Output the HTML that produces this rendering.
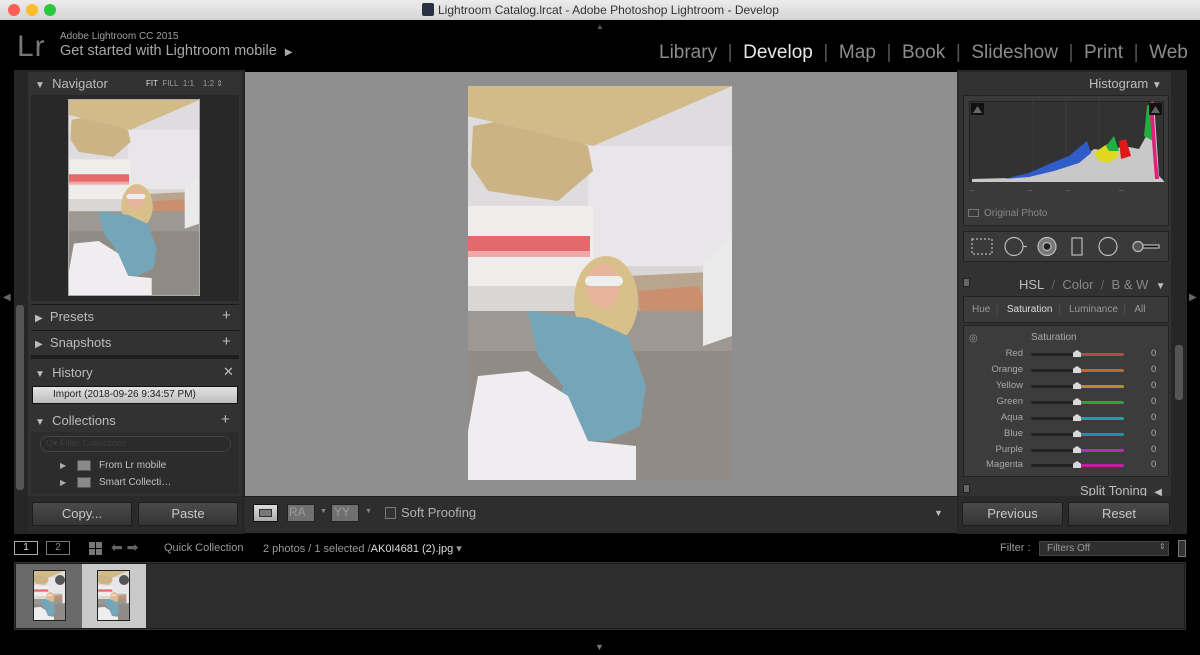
<!DOCTYPE html>
<html><head><meta charset="utf-8"><style>
*{margin:0;padding:0;box-sizing:border-box}
body{width:1200px;height:655px;overflow:hidden;background:#000;font-family:"Liberation Sans",sans-serif;position:relative}
.a{position:absolute}
.t{position:absolute;white-space:nowrap}
.hd{color:#bcbcbc;font-size:13px}
.sm{color:#9a9a9a;font-size:9px}
.btn{position:absolute;height:24px;background:linear-gradient(#4a4a4a,#353535);border:1px solid #1c1c1c;border-radius:2px;color:#c8c8c8;font-size:13px;text-align:center;line-height:22px}
.sl{position:absolute;left:1031px;width:93px;height:3px;border-radius:2px}
.lbl{position:absolute;width:60px;left:963px;text-align:right;color:#a8a8a8;font-size:9.5px}
.zero{position:absolute;left:1151px;color:#a8a8a8;font-size:9.5px}
.th{position:absolute;left:1073px;width:8px;height:7px;background:#d8d8d8;clip-path:polygon(50% 0,100% 40%,100% 100%,0 100%,0 40%)}
</style></head><body>
<svg width="0" height="0" style="position:absolute"><defs>
<symbol id="ph" viewBox="0 0 264 394" preserveAspectRatio="none">
<rect width="264" height="394" fill="#dedcde"/>
<rect x="120" y="60" width="144" height="130" fill="#e8e6e8"/>
<rect x="0" y="180" width="264" height="60" fill="#d9d6d6"/>
<polygon points="160,190 264,185 264,260 160,255" fill="#b9a48e"/>
<polygon points="170,205 230,200 250,240 175,245" fill="#c98f6f"/>
<polygon points="5,40 60,30 120,60 125,85 90,115 20,105 3,80" fill="#cbb386"/>
<rect x="0" y="120" width="125" height="80" fill="#efecec"/>
<rect x="0" y="150" width="122" height="20" fill="#e26a6a"/>
<rect x="0" y="165" width="122" height="6" fill="#f1a8a8"/>
<polygon points="0,0 264,0 255,4 125,60 0,30" fill="#d2bb88"/>
<rect x="0" y="225" width="264" height="169" fill="#908b85"/>
<rect x="0" y="225" width="264" height="40" fill="#9d9892"/>
<polygon points="235,175 264,150 264,250 235,260" fill="#eaeaea"/>
<ellipse cx="138" cy="215" rx="32" ry="45" fill="#d9c08a"/>
<ellipse cx="135" cy="200" rx="17" ry="22" fill="#e6b59b"/>
<rect x="117" y="190" width="38" height="10" rx="5" fill="#eee"/>
<polygon points="60,225 120,232 160,250 178,300 172,340 140,355 80,355 95,300 70,270" fill="#74a5b9"/>
<polygon points="0,345 10,290 60,285 100,310 120,355 168,360 168,394 0,394" fill="#efedf0"/>
</symbol></defs></svg>

<!-- title bar -->
<div class="a" style="left:0;top:0;width:1200px;height:20px;background:linear-gradient(#ececec,#d4d4d4)"></div>
<div class="a" style="left:8px;top:4px;width:12px;height:12px;border-radius:50%;background:#fc5f57"></div>
<div class="a" style="left:26px;top:4px;width:12px;height:12px;border-radius:50%;background:#fdbc2e"></div>
<div class="a" style="left:44px;top:4px;width:12px;height:12px;border-radius:50%;background:#29c840"></div>
<div class="a" style="left:422px;top:3px;width:12px;height:13px;background:#2a3140;border-radius:2px"></div>
<div class="t" style="left:438px;top:3px;font-size:12px;color:#333">Lightroom Catalog.lrcat - Adobe Photoshop Lightroom - Develop</div>
<div class="t" style="left:596px;top:22px;color:#555;font-size:8px">▲</div>

<!-- header -->
<div class="t" style="left:17px;top:30px;font-size:30px;color:#777;letter-spacing:1px">Lr</div>
<div class="t" style="left:60px;top:31px;font-size:10px;color:#a0a0a0">Adobe Lightroom CC 2015</div>
<div class="t" style="left:60px;top:43px;font-size:14.5px;color:#a8a8a8">Get started with Lightroom mobile &nbsp;<span style="font-size:10px">▶</span></div>
<div class="t" style="left:659px;top:42px;font-size:19px;color:#8c8c8c">Library <span style="color:#555">&nbsp;|&nbsp;</span> <span style="color:#e8e8e8">Develop</span> <span style="color:#555">&nbsp;|&nbsp;</span> Map <span style="color:#555">&nbsp;|&nbsp;</span> Book <span style="color:#555">&nbsp;|&nbsp;</span> Slideshow <span style="color:#555">&nbsp;|&nbsp;</span> Print <span style="color:#555">&nbsp;|&nbsp;</span> Web</div>

<!-- side arrows -->
<div class="t" style="left:3px;top:292px;color:#666;font-size:10px">◀</div>
<div class="t" style="left:1189px;top:292px;color:#666;font-size:10px">▶</div>

<!-- left panel -->
<div class="a" style="left:14px;top:70px;width:231px;height:464px;background:#262626"></div>
<div class="a" style="left:16px;top:305px;width:8px;height:185px;background:#555;border-radius:3px"></div>
<div class="a" style="left:28px;top:72px;width:214px;height:459px;background:#323232"></div>
<div class="t hd" style="left:35px;top:76px"><span style="font-size:10px">▼</span>&nbsp; Navigator</div>
<div class="t sm" style="left:146px;top:79px;font-size:8px"><span style="color:#ddd">FIT</span>&nbsp; FILL&nbsp; 1:1&nbsp;&nbsp;&nbsp; 1:2 ⇕</div>
<div class="a" style="left:31px;top:95px;width:208px;height:206px;background:#282828"></div>
<div class="a" style="left:68px;top:99px;width:132px;height:197px;border:1px solid #aaa"><svg width="130" height="195"><use href="#ph"/></svg></div>
<div class="a" style="left:31px;top:304px;width:208px;height:1px;background:#1a1a1a"></div>
<div class="t hd" style="left:35px;top:309px"><span style="font-size:10px">▶</span>&nbsp; Presets</div>
<div class="t hd" style="left:222px;top:307px;font-size:15px">+</div>
<div class="a" style="left:31px;top:330px;width:208px;height:1px;background:#1a1a1a"></div>
<div class="t hd" style="left:35px;top:335px"><span style="font-size:10px">▶</span>&nbsp; Snapshots</div>
<div class="t hd" style="left:222px;top:333px;font-size:15px">+</div>
<div class="a" style="left:31px;top:355px;width:208px;height:4px;background:#1e1e1e"></div>
<div class="t hd" style="left:35px;top:365px"><span style="font-size:10px">▼</span>&nbsp; History</div>
<div class="t hd" style="left:223px;top:364px">✕</div>
<div class="a" style="left:32px;top:386px;width:206px;height:18px;background:linear-gradient(#e2e2e2,#bdbdbd);border:1px solid #111"></div>
<div class="t" style="left:53px;top:389px;font-size:10px;color:#222">Import (2018-09-26 9:34:57 PM)</div>
<div class="t hd" style="left:35px;top:413px"><span style="font-size:10px">▼</span>&nbsp; Collections</div>
<div class="t hd" style="left:221px;top:411px;font-size:15px">+</div>
<div class="a" style="left:31px;top:432px;width:208px;height:62px;background:#2c2c2c"></div>
<div class="a" style="left:40px;top:436px;width:191px;height:16px;border:1px solid #444;border-radius:8px;background:#2a2a2a"></div>
<div class="t" style="left:46px;top:438px;font-size:9px;color:#3e3e3e">Q▾ Filter Collections</div>
<div class="t" style="left:60px;top:461px;font-size:8px;color:#aaa">▶</div>
<div class="a" style="left:77px;top:460px;width:14px;height:11px;background:#8a8a8a;border:1px solid #555"></div>
<div class="t" style="left:99px;top:460px;font-size:10px;color:#c0c0c0">From Lr mobile</div>
<div class="t" style="left:60px;top:478px;font-size:8px;color:#aaa">▶</div>
<div class="a" style="left:77px;top:477px;width:14px;height:11px;background:#8a8a8a;border:1px solid #555"></div>
<div class="t" style="left:99px;top:477px;font-size:10px;color:#c0c0c0">Smart Collecti…</div>
<div class="a" style="left:28px;top:496px;width:214px;height:36px;background:#2a2a2a"></div>
<div class="btn" style="left:32px;top:502px;width:100px">Copy...</div>
<div class="btn" style="left:138px;top:502px;width:100px">Paste</div>

<!-- center -->
<div class="a" style="left:245px;top:72px;width:712px;height:424px;background:#8f8f8f"></div>
<svg class="a" style="left:468px;top:86px" width="264" height="394"><use href="#ph"/></svg>
<div class="a" style="left:245px;top:496px;width:712px;height:37px;background:#2e2e2e;border-top:1px solid #1a1a1a"></div>
<div class="a" style="left:253px;top:504px;width:25px;height:18px;background:linear-gradient(#ddd,#aaa);border:1px solid #111"><div class="a" style="left:5px;top:4px;width:13px;height:8px;border:1px solid #333;background:#777"></div></div>
<div class="a" style="left:287px;top:504px;width:28px;height:18px;background:#707070;border:1px solid #222"></div>
<div class="t" style="left:289px;top:505px;font-size:12px;color:#9a9a9a">RA</div>
<div class="t" style="left:320px;top:508px;font-size:7px;color:#888">▼</div>
<div class="a" style="left:331px;top:504px;width:28px;height:18px;background:#707070;border:1px solid #222"></div>
<div class="t" style="left:334px;top:505px;font-size:12px;color:#9a9a9a">YY</div>
<div class="t" style="left:365px;top:508px;font-size:7px;color:#888">▼</div>
<div class="a" style="left:385px;top:507px;width:11px;height:12px;border:1px solid #777;background:#333"></div>
<div class="t" style="left:401px;top:505px;font-size:13px;color:#b0b0b0">Soft Proofing</div>
<div class="t" style="left:934px;top:508px;font-size:9px;color:#bbb">▼</div>

<!-- right panel -->
<div class="a" style="left:957px;top:70px;width:230px;height:464px;background:#262626"></div>
<div class="a" style="left:1175px;top:345px;width:8px;height:55px;background:#555;border-radius:3px"></div>
<div class="a" style="left:959px;top:72px;width:212px;height:459px;background:#323232"></div>
<div class="t hd" style="left:1089px;top:76px">Histogram <span style="font-size:10px">▼</span></div>
<div class="a" style="left:963px;top:95px;width:206px;height:131px;background:#3a3a3a;border:1px solid #222"></div>
<svg class="a" style="left:969px;top:101px" width="195" height="81">
<rect width="195" height="81" fill="#323232" stroke="#111"/>
<path d="M64 0V81M97 0V81M130 0V81" stroke="#3c3c3c"/>
<path d="M3 78 L40 77 L70 72 L90 66 L110 60 L125 48 L140 50 L155 45 L170 48 L180 30 L185 0 L190 75 L195 80 L195 81 L3 81Z" fill="#c8c8c8"/>
<path d="M35 78 L60 72 L80 63 L100 55 L112 45 L118 40 L122 52 L110 62 L85 70 L60 76Z" fill="#2f5cc8"/>
<path d="M125 52 L135 45 L145 40 L150 55 L140 62 L130 60Z" fill="#e0d820"/>
<path d="M137 45 L145 35 L150 50 L140 50Z" fill="#20b040"/>
<path d="M150 40 L157 38 L162 55 L152 58Z" fill="#e01818"/>
<path d="M175 35 L178 5 L182 2 L184 40Z" fill="#20b040"/>
<path d="M180 2 L184 0 L188 60 L190 78 L186 78 L183 40Z" fill="#e0207a"/>
<path d="M2 2h13v12H2z" fill="#111"/><path d="M4 12L8.5 5 13 12z" fill="#666"/>
<path d="M180 2h13v12h-13z" fill="#111"/><path d="M182 12L186.5 5 191 12z" fill="#666"/>
</svg>
<div class="t" style="left:970px;top:186px;font-size:8px;color:#777;letter-spacing:0">–&nbsp;&nbsp;&nbsp;&nbsp;&nbsp;&nbsp;&nbsp;&nbsp;&nbsp;&nbsp;&nbsp;&nbsp;&nbsp;&nbsp;&nbsp;&nbsp;&nbsp;&nbsp;&nbsp;&nbsp;&nbsp;&nbsp;&nbsp;&nbsp;–&nbsp;&nbsp;&nbsp;&nbsp;&nbsp;&nbsp;&nbsp;&nbsp;&nbsp;&nbsp;&nbsp;&nbsp;&nbsp;&nbsp;&nbsp;–&nbsp;&nbsp;&nbsp;&nbsp;&nbsp;&nbsp;&nbsp;&nbsp;&nbsp;&nbsp;&nbsp;&nbsp;&nbsp;&nbsp;&nbsp;&nbsp;&nbsp;&nbsp;&nbsp;&nbsp;&nbsp;&nbsp;–</div>
<div class="a" style="left:968px;top:209px;width:11px;height:8px;border:1px solid #777"></div>
<div class="t" style="left:984px;top:208px;font-size:10px;color:#888">Original Photo</div>
<div class="a" style="left:963px;top:231px;width:206px;height:31px;background:#3a3a3a;border:1px solid #222"></div>
<svg class="a" style="left:963px;top:231px" width="206" height="31" fill="none" stroke="#bbb" stroke-width="1.2">
<rect x="9" y="8" width="20" height="15" stroke-dasharray="2 2"/>
<circle cx="51" cy="15.5" r="9"/><path d="M60 15.5h4"/>
<circle cx="84" cy="15.5" r="9" fill="#777"/><circle cx="84" cy="15.5" r="4" fill="#222"/>
<rect x="109" y="7" width="10" height="17"/>
<circle cx="145" cy="15.5" r="9"/>
<circle cx="175" cy="15.5" r="5" fill="#555"/><rect x="180" y="14" width="16" height="3" fill="#111"/>
</svg>
<div class="a" style="left:963px;top:278px;width:7px;height:9px;background:#666;border:1px solid #222"></div>
<div class="t hd" style="left:1019px;top:277px">HSL&nbsp; <span style="color:#666">/</span>&nbsp; <span style="color:#888">Color</span>&nbsp; <span style="color:#666">/</span>&nbsp; <span style="color:#888">B &amp; W</span>&nbsp; <span style="font-size:10px">▼</span></div>
<div class="a" style="left:963px;top:296px;width:206px;height:27px;background:#3a3a3a;border:1px solid #222"></div>
<div class="t" style="left:972px;top:304px;font-size:10px;color:#999">Hue&nbsp;&nbsp;<span style="color:#555">|</span>&nbsp;&nbsp;&nbsp;<span style="color:#ddd">Saturation</span>&nbsp;&nbsp;<span style="color:#555">|</span>&nbsp;&nbsp;&nbsp;Luminance&nbsp;&nbsp;<span style="color:#555">|</span>&nbsp;&nbsp;&nbsp;All</div>
<div class="a" style="left:963px;top:325px;width:206px;height:152px;background:#3c3c3c;border:1px solid #222"></div>
<div class="t" style="left:969px;top:333px;font-size:10px;color:#999">◎</div>
<div class="t" style="left:1031px;top:332px;font-size:10px;color:#aaa">Saturation</div>
<div class="lbl" style="top:348px">Red</div><div class="sl" style="top:353px;background:linear-gradient(90deg,#222 50%,#b04a4a 50%)"></div><div class="th" style="top:350px"></div><div class="zero" style="top:348px">0</div>
<div class="lbl" style="top:364px">Orange</div><div class="sl" style="top:369px;background:linear-gradient(90deg,#222 50%,#b86a30 50%)"></div><div class="th" style="top:366px"></div><div class="zero" style="top:364px">0</div>
<div class="lbl" style="top:380px">Yellow</div><div class="sl" style="top:385px;background:linear-gradient(90deg,#222 50%,#b09030 50%)"></div><div class="th" style="top:382px"></div><div class="zero" style="top:380px">0</div>
<div class="lbl" style="top:396px">Green</div><div class="sl" style="top:401px;background:linear-gradient(90deg,#222 50%,#30a040 50%)"></div><div class="th" style="top:398px"></div><div class="zero" style="top:396px">0</div>
<div class="lbl" style="top:412px">Aqua</div><div class="sl" style="top:417px;background:linear-gradient(90deg,#222 50%,#20a0a0 50%)"></div><div class="th" style="top:414px"></div><div class="zero" style="top:412px">0</div>
<div class="lbl" style="top:428px">Blue</div><div class="sl" style="top:433px;background:linear-gradient(90deg,#222 50%,#2090a8 50%)"></div><div class="th" style="top:430px"></div><div class="zero" style="top:428px">0</div>
<div class="lbl" style="top:444px">Purple</div><div class="sl" style="top:449px;background:linear-gradient(90deg,#222 50%,#b030b0 50%)"></div><div class="th" style="top:446px"></div><div class="zero" style="top:444px">0</div>
<div class="lbl" style="top:459px">Magenta</div><div class="sl" style="top:464px;background:linear-gradient(90deg,#222 50%,#c020a0 50%)"></div><div class="th" style="top:461px"></div><div class="zero" style="top:459px">0</div>
<div class="a" style="left:963px;top:484px;width:7px;height:9px;background:#666;border:1px solid #222"></div>
<div class="t hd" style="left:1080px;top:483px">Split Toning&nbsp; <span style="font-size:10px">◀</span></div>
<div class="a" style="left:959px;top:496px;width:212px;height:36px;background:#2a2a2a"></div>
<div class="btn" style="left:962px;top:502px;width:101px">Previous</div>
<div class="btn" style="left:1068px;top:502px;width:102px">Reset</div>

<!-- filmstrip bar -->
<div class="a" style="left:14px;top:541px;width:24px;height:14px;border:1px solid #aaa;color:#ddd;font-size:10px;text-align:center;line-height:12px">1</div>
<div class="a" style="left:46px;top:541px;width:24px;height:14px;border:1px solid #777;color:#888;font-size:10px;text-align:center;line-height:12px">2</div>
<div class="a" style="left:89px;top:542px;width:13px;height:13px;background:repeating-linear-gradient(90deg,#777 0 6px,transparent 6px 7px);-webkit-mask:repeating-linear-gradient(#000 0 6px,transparent 6px 7px)"></div>
<div class="t" style="left:111px;top:539px;font-size:14px;color:#666">⬅ ➡</div>
<div class="t" style="left:164px;top:542px;font-size:11px;color:#999">Quick Collection</div>
<div class="t" style="left:263px;top:542px;font-size:11px;color:#999">2 photos / 1 selected /<span style="color:#ddd">AK0I4681 (2).jpg</span> ▾</div>
<div class="t" style="left:1000px;top:542px;font-size:11px;color:#999">Filter :</div>
<div class="a" style="left:1039px;top:541px;width:130px;height:15px;background:#2e2e2e;border:1px solid #444"></div>
<div class="t" style="left:1047px;top:543px;font-size:10px;color:#999">Filters Off</div>
<div class="t" style="left:1159px;top:542px;font-size:8px;color:#999">⇕</div>
<div class="a" style="left:1178px;top:540px;width:8px;height:17px;background:#333;border:1px solid #777"></div>

<!-- filmstrip -->
<div class="a" style="left:14px;top:562px;width:1172px;height:68px;background:#1a1a1a;border:1px solid #333"></div>
<div class="a" style="left:16px;top:564px;width:1168px;height:64px;background:#2d2d2d"></div>
<div class="a" style="left:16px;top:564px;width:66px;height:64px;background:#6a6a6a"></div>
<div class="a" style="left:82px;top:564px;width:64px;height:64px;background:#c9c9c9"></div>
<svg class="a" style="left:33px;top:570px" width="33" height="51"><use href="#ph"/><rect width="33" height="51" fill="none" stroke="#222" stroke-width="2"/><circle cx="27" cy="10" r="5" fill="#555"/></svg>
<svg class="a" style="left:97px;top:570px" width="33" height="51"><use href="#ph"/><rect width="33" height="51" fill="none" stroke="#222" stroke-width="2"/><circle cx="27" cy="10" r="5" fill="#555"/></svg>
<div class="t" style="left:595px;top:642px;color:#777;font-size:9px">▼</div>
</body></html>
